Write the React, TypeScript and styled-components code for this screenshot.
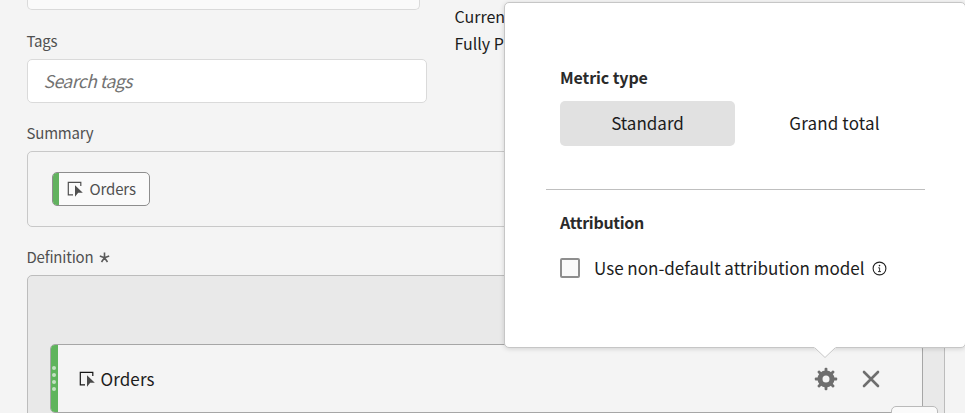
import React from "react";
import styled, { createGlobalStyle } from "styled-components";

const GlobalStyle = createGlobalStyle`
  *, *::before, *::after { box-sizing: border-box; }
  html, body { margin: 0; padding: 0; }
  body {
    background: #f4f4f4;
    font-family: "Noto Sans CJK SC", "Noto Sans", sans-serif;
    overflow: hidden;
  }
`;

const Page = styled.main`
  position: relative;
  width: 965px;
  height: 413px;
  overflow: hidden;
  background: #f4f4f4;
  padding-left: 26.5px;
`;

const Text = styled.span<{
  $size: number;
  $track?: number;
  $color?: string;
  $bold?: boolean;
  $italic?: boolean;
}>`
  display: block;
  white-space: nowrap;
  line-height: 20px;
  font-size: ${(p) => p.$size}px;
  letter-spacing: ${(p) => p.$track ?? 0}px;
  color: ${(p) => p.$color ?? "#1c1c1c"};
  font-weight: ${(p) => (p.$bold ? 700 : 400)};
  font-style: ${(p) => (p.$italic ? "italic" : "normal")};
`;

const TopSection = styled.section`
  display: grid;
  grid-template-columns: 400px 1fr;
  column-gap: 28px;
  height: 103px;
`;

const Fields = styled.div`
  display: flex;
  flex-direction: column;
`;

const PreviousField = styled.div`
  width: 393px;
  height: 10px;
  border: 1px solid #dadada;
  border-top: 0;
  border-radius: 0 0 5px 5px;
  background: #fafafa;
`;

const FieldLabel = styled.div<{ $top: number; $bottom: number }>`
  display: flex;
  align-items: center;
  gap: 6px;
  height: 20px;
  margin: ${(p) => p.$top}px 0 ${(p) => p.$bottom}px;
`;

const SearchField = styled.div`
  display: flex;
  align-items: center;
  width: 400px;
  height: 44px;
  padding-left: 16px;
  border: 1px solid #dadada;
  border-radius: 5px;
  background: #fff;
`;

const Status = styled.div`
  display: flex;
  flex-direction: column;
  gap: 7px;
  padding-top: 6px;
`;

const SummaryBox = styled.section`
  display: flex;
  align-items: center;
  width: 918px;
  height: 76px;
  padding-left: 24px;
  border: 1px solid #c8c8c8;
  border-radius: 5px;
`;

const Chip = styled.div`
  display: flex;
  align-items: center;
  width: 98px;
  height: 34px;
  border: 1px solid #8e8e8e;
  border-radius: 5px;
  background: #fafafa;
  overflow: hidden;
`;

const ChipAccent = styled.span`
  width: 6px;
  height: 100%;
  margin-right: 8px;
  background: #62b25f;
`;

const DefinitionBox = styled.section`
  width: 918px;
  height: 160px;
  padding: 68px 0 0 22px;
  border: 1px solid #bcbcbc;
  border-radius: 5px;
  background: #e9e9e9;
`;

const MetricCard = styled.div`
  position: relative;
  display: flex;
  align-items: center;
  width: 873px;
  height: 69px;
  border: 1px solid #a6a6a6;
  border-radius: 5px;
  background: #f4f4f4;
`;

const Grip = styled.span`
  display: flex;
  flex-direction: column;
  align-items: center;
  justify-content: center;
  gap: 3px;
  width: 7px;
  height: 100%;
  margin-right: 21px;
  border-radius: 4px 0 0 4px;
  background: #5fb45c;
`;

const GripDot = styled.i`
  width: 4px;
  height: 4px;
  border-radius: 50%;
  background: #c3e1c2;
`;

const CardActions = styled.div`
  display: flex;
  align-items: center;
  gap: 24px;
  margin-left: auto;
  padding-right: 41.5px;
`;

const CornerButton = styled.div`
  position: absolute;
  right: -16px;
  top: 61px;
  width: 47px;
  height: 30px;
  border: 1px solid #bababa;
  border-radius: 5px;
  background: #fafafa;
`;

const Popover = styled.aside`
  position: absolute;
  left: 504px;
  top: 2px;
  width: 462px;
  height: 346px;
  padding: 64px 40px 0 55px;
  border: 1px solid #c6c6c6;
  border-radius: 5px;
  background: #fff;
  box-shadow: 0 1px 5px rgba(0, 0, 0, 0.14);
`;

const PopoverTip = styled.svg`
  position: absolute;
  left: 309px;
  top: 343px;
`;

const Segments = styled.div`
  display: grid;
  grid-template-columns: 175px 175px;
  column-gap: 12px;
  margin-top: 14px;
`;

const Segment = styled.button<{ $selected?: boolean }>`
  display: flex;
  align-items: center;
  justify-content: center;
  height: 45px;
  padding: 0 0 1px;
  border: 0;
  border-radius: 5px;
  font-family: inherit;
  background: ${(p) => (p.$selected ? "#e1e1e1" : "transparent")};
`;

const Divider = styled.hr`
  width: 379px;
  height: 1px;
  margin: 43px 0 22px -14px;
  border: 0;
  background: #bfbfbf;
`;

const CheckRow = styled.label`
  display: flex;
  align-items: center;
  height: 20px;
  margin-top: 26px;
`;

const CheckBox = styled.span`
  width: 20px;
  height: 20px;
  margin-right: 14px;
  border: 2px solid #8e8e8e;
  border-radius: 2px;
  background: #fafafa;
`;

const InfoMark = styled.svg`
  display: block;
  margin-left: 7px;
`;

const IconSlot = styled.span<{ $gap: number }>`
  display: flex;
  flex: none;
  margin-right: ${(p) => p.$gap}px;
`;

function EventIcon({ color, arrow }: { color: string; arrow: string }) {
  return (
    <svg width="16" height="16" viewBox="0 0 16 16" fill="none">
      <path d="M6 13.8H1.3V1.4h12.5V5" stroke={color} strokeWidth="1.2" />
      <path d="M8 4.3v11.4l3.2-4h4.6z" fill={arrow} />
    </svg>
  );
}

function GearIcon() {
  const angles = [0, 45, 90, 135, 180, 225, 270, 315];
  return (
    <svg width="24" height="24" viewBox="0 0 24 24">
      <g fill="#6e6e6e">
        {angles.map((a) => (
          <rect
            key={a}
            x="10.6"
            y="0.8"
            width="2.8"
            height="5"
            rx="1"
            transform={`rotate(${a} 12 12)`}
          />
        ))}
      </g>
      <circle cx="12" cy="12" r="6" fill="none" stroke="#6e6e6e" strokeWidth="5" />
    </svg>
  );
}

function CloseIcon() {
  return (
    <svg width="18" height="18" viewBox="0 0 18 18">
      <path
        d="M2 2l14 14M16 2L2 16"
        stroke="#6e6e6e"
        strokeWidth="2.6"
        strokeLinecap="round"
      />
    </svg>
  );
}

function RequiredIcon() {
  return (
    <svg width="11" height="11" viewBox="0 0 10 11">
      <path
        d="M5 5.7V.6M5 5.7L.3 4.1M5 5.7L9.7 4.1M5 5.7L2 10M5 5.7L8 10"
        stroke="#5a5a5a"
        strokeWidth="1.6"
      />
    </svg>
  );
}

export default function App() {
  return (
    <>
      <GlobalStyle />
      <Page>
        <TopSection>
          <Fields>
            <PreviousField />
            <FieldLabel $top={21} $bottom={8}>
              <Text $size={15} $track={-0.2} $color="#505050">Tags</Text>
            </FieldLabel>
            <SearchField>
              <Text $size={17.5} $track={-0.5} $color="#727272" $italic>Search tags</Text>
            </SearchField>
          </Fields>
          <Status>
            <Text $size={16}>Curren</Text>
            <Text $size={16}>Fully P</Text>
          </Status>
        </TopSection>

        <FieldLabel $top={20} $bottom={8}>
          <Text $size={15} $track={-0.2} $color="#505050">Summary</Text>
        </FieldLabel>
        <SummaryBox>
          <Chip>
            <ChipAccent />
            <IconSlot $gap={7}>
              <EventIcon color="#505050" arrow="#505050" />
            </IconSlot>
            <Text $size={15} $track={-0.15} $color="#505050">Orders</Text>
          </Chip>
        </SummaryBox>

        <FieldLabel $top={20} $bottom={8}>
          <Text $size={15} $track={-0.2} $color="#505050">Definition</Text>
          <RequiredIcon />
        </FieldLabel>
        <DefinitionBox>
          <MetricCard>
            <Grip>
              <GripDot />
              <GripDot />
              <GripDot />
              <GripDot />
            </Grip>
            <IconSlot $gap={6}>
              <EventIcon color="#161616" arrow="#4a4a4a" />
            </IconSlot>
            <Text $size={17} $track={0.1}>Orders</Text>
            <CardActions>
              <GearIcon />
              <CloseIcon />
            </CardActions>
            <CornerButton />
          </MetricCard>
        </DefinitionBox>

        <Popover>
          <Text $size={16} $track={-0.1} $color="#2a2a2a" $bold>Metric type</Text>
          <Segments>
            <Segment $selected>
              <Text $size={17}>Standard</Text>
            </Segment>
            <Segment>
              <Text $size={17} $track={0.15}>Grand total</Text>
            </Segment>
          </Segments>
          <Divider />
          <Text $size={16} $track={-0.3} $color="#2a2a2a" $bold>Attribution</Text>
          <CheckRow>
            <CheckBox />
            <Text $size={17}>Use non-default attribution model</Text>
            <InfoMark width="15" height="15" viewBox="0 0 15 15" fill="none">
              <circle cx="7.5" cy="7.5" r="6.4" stroke="#222" strokeWidth="1.1" />
              <circle cx="7.5" cy="4.6" r="0.8" fill="#222" />
              <path d="M6.2 6.8h1.4v3.8M6 10.6h3" stroke="#222" strokeWidth="0.9" />
            </InfoMark>
          </CheckRow>
          <PopoverTip width="22" height="13" viewBox="0 0 22 13">
            <path d="M0 0h22v1.5L11 12 0 1.5z" fill="#fff" />
            <path d="M.5 1.5L11 11.5 21.5 1.5" fill="none" stroke="#c6c6c6" />
          </PopoverTip>
        </Popover>
      </Page>
    </>
  );
}
